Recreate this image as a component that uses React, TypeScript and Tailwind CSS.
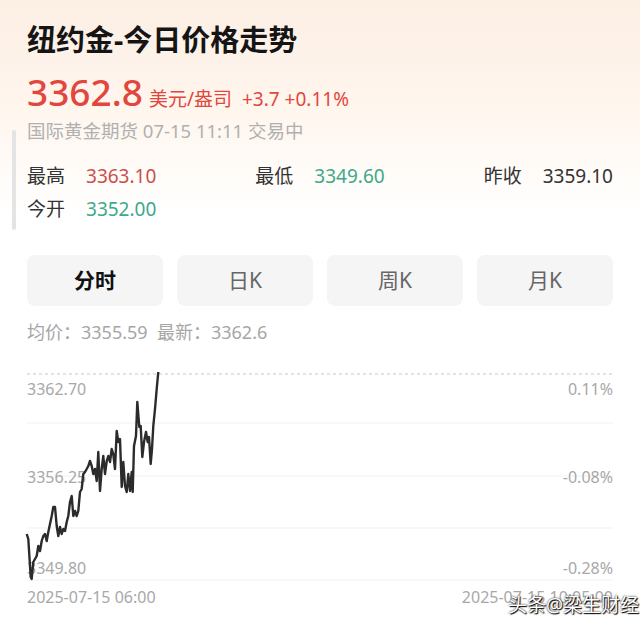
import React from 'react';

const font = '[font-family:"Noto_Sans","Noto_Sans_CJK_SC",sans-serif]';

const pts: [number, number][] = [
  [26.7, 535], [28.3, 540], [30.7, 578], [31.7, 580], [33.3, 563], [35, 560], [36.7, 557], [38.3, 547],
  [40, 552], [41.7, 542], [43.3, 537], [45, 535], [46.7, 542], [48.3, 533], [50, 525], [51.7, 517],
  [53.3, 508], [55, 508], [56.7, 527], [58.3, 537], [60, 528], [61.7, 535], [63.3, 530], [65, 532],
  [66.7, 523], [68.3, 517], [70, 503], [71.7, 497], [73.3, 517], [75, 512], [76.7, 517], [78.3, 512],
  [80, 493], [81.7, 490], [83.3, 475], [85, 473], [86.7, 470], [88.3, 467], [90, 462], [91.7, 467],
  [93.3, 475], [95, 470], [96.7, 482], [98.3, 453], [100, 492], [101.7, 470], [103.3, 457], [105, 475],
  [106.7, 462], [108.3, 457], [110, 463], [111.7, 450], [113.3, 455], [115, 470], [116.7, 432], [118.3, 443],
  [120, 440], [121.7, 488], [123.3, 463], [125, 487], [126.7, 493], [128.3, 475], [130, 492], [131.7, 473],
  [132.7, 493], [134, 447], [136, 437], [137.3, 403], [139.3, 428], [140.7, 427], [142.3, 458], [144, 443],
  [146, 433], [147.7, 443], [149, 438], [150.7, 465], [152, 450], [153.3, 427], [155, 410], [156.7, 390],
  [158.3, 373],
];

const tabs = ['分时', '日K', '周K', '月K'];

const Chart: React.FC = () => {
  const top = 360;
  const line = pts.map(([x, y]) => `${x},${y - top}`).join(' ');
  return (
    <svg width="640" height="265" className="block" style={{ fontFamily: '"Noto Sans", sans-serif' }}>
      <line x1="27" y1="15" x2="613" y2="15" stroke="#c8c8c8" strokeDasharray="3 3" />
      {[64, 117, 169, 221].map(y => (
        <line key={y} x1="27" y1={y} x2="613" y2={y} stroke="#f1f1f1" />
      ))}
      <g fill="#a8a8a8" fontSize="16">
        <text x="27" y="36">3362.70</text>
        <text x="27" y="124">3356.25</text>
        <text x="27" y="215">3349.80</text>
        <text x="27" y="244">2025-07-15 06:00</text>
        <text x="613" y="36" textAnchor="end">0.11%</text>
        <text x="613" y="124" textAnchor="end">-0.08%</text>
        <text x="613" y="215" textAnchor="end">-0.28%</text>
        <text x="613" y="244" textAnchor="end">2025-07-15 10:05:00</text>
      </g>
      <polyline points={line} fill="none" stroke="#2b2b2b" strokeWidth="2.4" strokeLinejoin="round" />
    </svg>
  );
};

const App: React.FC = () => {
  return (
    <div
      className={`relative w-[640px] h-[625px] overflow-hidden bg-[linear-gradient(180deg,#fcefe4_0%,#fff6ee_18%,#ffffff_34%)] ${font}`}
    >
      {/* scroll indicator */}
      <div className="absolute left-[12px] top-[130px] w-[4px] h-[100px] rounded-full bg-[#e4e4e4]" />

      <div className="px-[27px] pt-[21px]">
        <h1 className="text-[29px] leading-[37px] font-bold text-[#151515]">纽约金-今日价格走势</h1>

        <div className="mt-[12px] flex items-baseline text-[#e2463c]">
          <span className="text-[37px] leading-[44px] font-medium">3362.8</span>
          <span className="ml-[6px] text-[19px]">美元/盎司</span>
          <span className="ml-[10px] text-[19px]">+3.7 +0.11%</span>
        </div>

        <div className="mt-[5px] text-[18.5px] leading-[24px] text-[#b0b0b0]">国际黄金期货 07-15 11:11 交易中</div>

        {/* stats */}
        <div className="mt-[20px] flex justify-between text-[19px] leading-[26px]">
          <div className="flex gap-[21px]">
            <span className="text-[#333]">最高</span>
            <span className="text-[#c9504c]">3363.10</span>
          </div>
          <div className="flex gap-[21px]">
            <span className="text-[#333]">最低</span>
            <span className="text-[#3ea98a]">3349.60</span>
          </div>
          <div className="flex gap-[21px]">
            <span className="text-[#333]">昨收</span>
            <span className="text-[#333]">3359.10</span>
          </div>
        </div>
        <div className="mt-[7px] flex gap-[21px] text-[19px] leading-[26px]">
          <span className="text-[#333]">今开</span>
          <span className="text-[#3ea98a]">3352.00</span>
        </div>

        {/* tabs */}
        <div className="mt-[33px] grid grid-cols-4 gap-[14px]">
          {tabs.map((t, i) => (
            <div
              key={t}
              className={`h-[51px] rounded-[8px] bg-[#f5f5f5] flex items-center justify-center text-[21px] ${
                i === 0 ? 'font-bold text-[#111]' : 'text-[#666]'
              }`}
            >
              {t}
            </div>
          ))}
        </div>

        <div className="mt-[14px] text-[18px] leading-[24px] text-[#a6a6a6]">
          均价：3355.59&nbsp;&nbsp;最新：3362.6
        </div>
      </div>

      <div className="mt-[15px]">
        <Chart />
      </div>

      {/* watermark */}
      <div className="absolute left-[508px] top-[592px] text-[19px] leading-[26px] text-white [text-shadow:0_0_2px_#000,1px_1px_1px_#000]">
        头条@梁生财经
      </div>
    </div>
  );
};

export default App;
